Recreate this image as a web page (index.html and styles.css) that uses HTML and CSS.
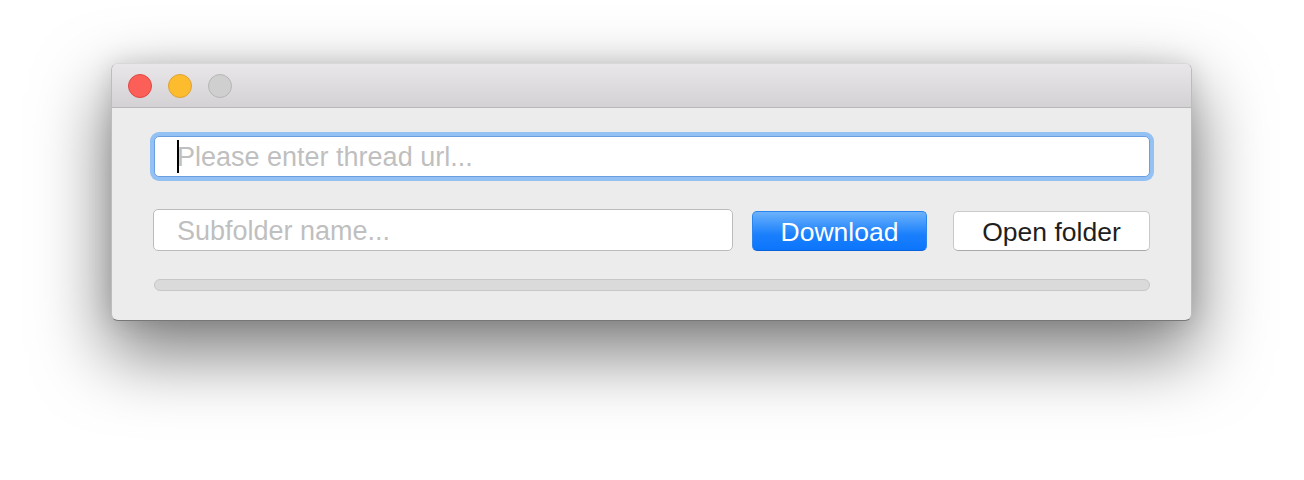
FILE: index.html
```html
<!DOCTYPE html>
<html>
<head>
<meta charset="utf-8">
<link rel="stylesheet" href="styles.css">
</head>
<body>
<div class="window">
  <div class="titlebar">
    <span class="light close"></span>
    <span class="light minimize"></span>
    <span class="light zoom"></span>
  </div>
  <div class="content">
    <div class="url-field">
      <span class="caret"></span>
      <span class="placeholder">Please enter thread url...</span>
    </div>
    <div class="row">
      <div class="sub-field"><span class="placeholder">Subfolder name...</span></div>
      <button class="btn primary">Download</button>
      <button class="btn secondary">Open folder</button>
    </div>
    <div class="progress"></div>
  </div>
</div>
</body>
</html>
```
FILE: styles.css
```css
html, body {
  margin: 0;
  padding: 0;
  background: #ffffff;
}
body {
  box-sizing: border-box;
  min-height: 480px;
  padding: 63px 0 0 111px;
  font-family: "Liberation Sans", Arial, sans-serif;
}
.window {
  width: 1081px;
  height: 258px;
  box-sizing: border-box;
  background: #ececec;
  border: 1px solid #bdbdbd;
  border-top-color: #d8d8d8;
  border-bottom-color: #777777;
  border-radius: 7px;
  box-shadow: 0 30px 70px 4px rgba(0, 0, 0, 0.5), 0 0 24px rgba(0, 0, 0, 0.12);
  overflow: hidden;
}
.titlebar {
  height: 44px;
  box-sizing: border-box;
  background: linear-gradient(#e9e7e9, #d3d1d3);
  border-bottom: 1px solid #b9b7b9;
  display: flex;
  align-items: center;
  padding-left: 16px;
  gap: 16px;
}
.light {
  width: 24px;
  height: 24px;
  box-sizing: border-box;
  border-radius: 50%;
  display: block;
}
.close { background: #fc5f57; border: 1px solid #df4744; }
.minimize { background: #fdbc2e; border: 1px solid #dea236; }
.zoom { background: #d0cfd0; border: 1px solid #b7b6b7; }
.content {
  padding: 28px 41px 0 42px;
}
.url-field {
  height: 41px;
  box-sizing: border-box;
  background: #fff;
  border: 1px solid #6a9ee0;
  border-radius: 5px;
  box-shadow: 0 0 0 4px #94c1f3;
  display: flex;
  align-items: center;
  padding-left: 22px;
  padding-top: 2px;
  position: relative;
}
.caret {
  width: 2px;
  height: 33px;
  background: #000;
  position: absolute;
  left: 22px;
  top: 3px;
}
.placeholder {
  color: #bfbfbf;
  font-size: 27px;
  line-height: 1;
}
.row {
  display: flex;
  align-items: center;
  margin-top: 32px;
  height: 42px;
}
.sub-field {
  width: 580px;
  height: 42px;
  box-sizing: border-box;
  background: #fff;
  border: 1px solid #bcbcbc;
  border-radius: 5px;
  display: flex;
  align-items: center;
  padding-left: 23px;
  padding-top: 2px;
  margin-left: -1px;
}
.btn {
  font-family: "Liberation Sans", Arial, sans-serif;
  font-size: 26.5px;
  height: 40px;
  box-sizing: border-box;
  border-radius: 5px;
  padding: 2px 0 0;
  margin-top: 2px;
}
.primary {
  width: 175px;
  margin-left: 19px;
  color: #fff;
  background: linear-gradient(#6bb2fb, #1a7ffc 60%, #0b75fc);
  border: 1px solid #2c85ee;
  border-bottom-color: #0a62d8;
}
.secondary {
  width: 197px;
  margin-left: 26px;
  color: #1e1e1e;
  background: #fff;
  border: 1px solid #c9c9c9;
  border-bottom-color: #a9a9a9;
}
.progress {
  margin-top: 28px;
  height: 12px;
  box-sizing: border-box;
  background: #dadada;
  border: 1px solid #c7c7c7;
  border-radius: 6px;
}
```
